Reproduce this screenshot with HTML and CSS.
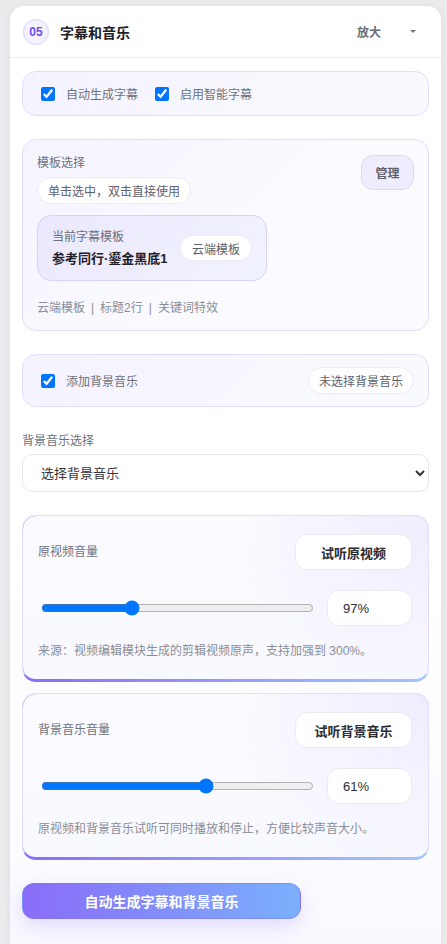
FILE: index.html
```html
<!DOCTYPE html>
<html lang="zh-CN">
<head>
<meta charset="utf-8">
<title>字幕和音乐</title>
<link rel="stylesheet" href="styles.css">
</head>
<body>
<div class="panel">
  <div class="panel-head">
    <span class="badge">05</span>
    <span class="title">字幕和音乐</span>
    <span class="zoom">放大</span>
    <span class="caret"></span>
  </div>
  <div class="panel-body">
    <div class="card card-checks">
      <label class="check"><input type="checkbox" checked><span>自动生成字幕</span></label>
      <label class="check"><input type="checkbox" checked><span>启用智能字幕</span></label>
    </div>

    <div class="card card-template">
      <div class="tpl-top">
        <div class="tpl-left">
          <div class="label">模板选择</div>
          <span class="pill">单击选中，双击直接使用</span>
        </div>
        <button class="btn-manage">管理</button>
      </div>
      <div class="tpl-current">
        <div class="tpl-info">
          <div class="tpl-sub">当前字幕模板</div>
          <div class="tpl-name">参考同行·鎏金黑底1</div>
        </div>
        <span class="pill pill-sm">云端模板</span>
      </div>
      <div class="tpl-meta">云端模板&ensp;|&ensp;标题2行&ensp;|&ensp;关键词特效</div>
    </div>

    <div class="card card-bgm">
      <label class="check"><input type="checkbox" checked><span>添加背景音乐</span></label>
      <span class="pill">未选择背景音乐</span>
    </div>

    <div class="field">
      <div class="field-label">背景音乐选择</div>
      <select class="select">
        <option>选择背景音乐</option>
      </select>
    </div>

    <div class="vol-group">
      <div class="card card-vol">
        <div class="vol-top">
          <span class="label">原视频音量</span>
          <button class="btn-listen">试听原视频</button>
        </div>
        <div class="vol-row">
          <input class="range" type="range" min="0" max="300" value="97">
          <input class="num" type="text" value="97%">
        </div>
        <div class="note">来源：视频编辑模块生成的剪辑视频原声，支持加强到 300%。</div>
      </div>

      <div class="card card-vol">
        <div class="vol-top">
          <span class="label">背景音乐音量</span>
          <button class="btn-listen">试听背景音乐</button>
        </div>
        <div class="vol-row">
          <input class="range" type="range" min="0" max="100" value="61">
          <input class="num" type="text" value="61%">
        </div>
        <div class="note">原视频和背景音乐试听可同时播放和停止，方便比较声音大小。</div>
      </div>
    </div>

    <button class="btn-primary">自动生成字幕和背景音乐</button>
  </div>
</div>
</body>
</html>
```
FILE: styles.css
```css
* { box-sizing: border-box; }
html, body {
  margin: 0;
  padding: 0;
  background: #ebebee;
  font-family: "Liberation Sans", "Noto Sans CJK SC", sans-serif;
  color: #222;
}
body { height: 944px; overflow: hidden; }

.panel {
  margin: 6px 6px 0 10px;
  min-height: 938px;
  background: linear-gradient(180deg, #ffffff 0%, #ffffff 60%, #faf9ff 100%);
  border-radius: 14px 14px 0 0;
  box-shadow: 0 0 8px rgba(40, 40, 70, 0.06);
}

.panel-head {
  height: 52px;
  display: flex;
  align-items: center;
  padding: 0 12px 0 13px;
  border-bottom: 1px solid #ececf0;
}
.badge {
  width: 26px;
  height: 26px;
  border-radius: 50%;
  border: 1px solid #d8d0fb;
  background: #f5f2ff;
  color: #6b4ff2;
  font-size: 12px;
  font-weight: 700;
  display: flex;
  align-items: center;
  justify-content: center;
}
.title {
  margin-left: 11px;
  font-size: 14px;
  font-weight: 700;
  color: #1f2127;
  flex: 1;
}
.zoom {
  font-size: 12px;
  font-weight: 700;
  color: #6b6e76;
}
.caret {
  margin-left: 29px;
  margin-right: 13px;
  width: 0;
  height: 0;
  border-left: 3px solid transparent;
  border-right: 3px solid transparent;
  border-top: 3px solid #777;
}

.panel-body {
  padding: 13px 12px 24px 12px;
  display: flex;
  flex-direction: column;
}

.card {
  border: 1px solid #e3ddfb;
  border-radius: 14px;
  background: linear-gradient(135deg, #f4f2fe 0%, #f8f8ff 60%, #f9faff 100%);
}

.check {
  display: flex;
  align-items: center;
  font-size: 12px;
  color: #6e717b;
}
.check input {
  width: 14px;
  height: 14px;
  margin: 0 11px 0 0;
  accent-color: #0075ff;
}

.card-checks {
  height: 45px;
  display: flex;
  align-items: center;
  padding: 0 18px;
  gap: 17px;
}

.card-template {
  margin-top: 23px;
  padding: 14px 14px 16px 14px;
  height: 192px;
  background: linear-gradient(135deg, #f6f4ff 0%, #fafaff 55%, #fbfbff 100%);
}
.tpl-top {
  display: flex;
  justify-content: space-between;
  align-items: flex-start;
}
.tpl-left {
  display: flex;
  flex-direction: column;
  align-items: flex-start;
}
.label {
  font-size: 12px;
  color: #6e717b;
  line-height: 18px;
}
.tpl-left .pill { margin-top: 5px; }
.pill {
  display: inline-flex;
  align-items: center;
  height: 27px;
  padding: 0 10px;
  border-radius: 14px;
  background: #ffffff;
  border: 1px solid #eceaf3;
  font-size: 12px;
  color: #5e616b;
  white-space: nowrap;
}
.pill-sm { height: 26px; padding: 0 11px; }
.btn-manage {
  width: 53px;
  height: 35px;
  margin-top: 1px;
  border-radius: 12px;
  border: 1px solid #ddd6fb;
  background: #efedfd;
  font-family: inherit;
  font-size: 12px;
  font-weight: 700;
  color: #5d5f68;
}
.tpl-current {
  margin-top: 11px;
  width: 230px;
  height: 66px;
  border-radius: 14px;
  border: 1px solid #d8d0fa;
  background: linear-gradient(135deg, #ebe8fd 0%, #f1f2fe 100%);
  display: flex;
  align-items: center;
  justify-content: space-between;
  padding: 0 14px 0 14px;
}
.tpl-sub {
  font-size: 12px;
  color: #6e717b;
  line-height: 18px;
}
.tpl-name {
  margin-top: 4px;
  font-size: 13px;
  font-weight: 700;
  color: #1f2127;
  line-height: 18px;
}
.tpl-meta {
  margin-top: 18px;
  font-size: 12px;
  color: #8a8d96;
  line-height: 18px;
}

.card-bgm {
  margin-top: 23px;
  height: 53px;
  display: flex;
  align-items: center;
  justify-content: space-between;
  padding: 0 14px 0 18px;
}

.field { margin-top: 25px; }
.field-label {
  font-size: 12px;
  color: #6e717b;
  line-height: 18px;
}
.select {
  margin-top: 4px;
  width: 100%;
  height: 38px;
  border: 1px solid #e6e6ee;
  border-radius: 10px;
  background: #ffffff;
  padding: 0 4px 0 14px;
  font-family: inherit;
  font-size: 13px;
  color: #33353b;
}

.vol-group {
  margin-top: 23px;
  display: flex;
  flex-direction: column;
  gap: 11px;
}
.card-vol {
  height: 167px;
  padding: 18px 16px 0 15px;
  border: 1px solid #e3ddfb;
  border-bottom: 3px solid transparent;
  background:
    radial-gradient(circle at 100% 0%, #efecfe 0%, rgba(247,247,255,0) 45%) padding-box,
    linear-gradient(180deg, #fbfbff 0%, #f8f9ff 100%) padding-box,
    linear-gradient(90deg, #8b6cf7 0%, #a4c6fd 100%) border-box;
}
.vol-top {
  display: flex;
  justify-content: space-between;
  align-items: center;
}
.btn-listen {
  width: 117px;
  height: 36px;
  border-radius: 12px;
  border: 1px solid #ebeaf2;
  background: #ffffff;
  font-family: inherit;
  font-size: 13px;
  font-weight: 700;
  color: #2a2c32;
}
.vol-row {
  margin-top: 20px;
  display: flex;
  align-items: center;
  gap: 13px;
}
.range {
  flex: 1;
  min-width: 0;
  margin: 0 0 0 3px;
  accent-color: #0075ff;
}
.num {
  width: 85px;
  height: 36px;
  border-radius: 12px;
  border: 1px solid #ebeaf2;
  background: #ffffff;
  padding: 0 15px;
  font-family: inherit;
  font-size: 13px;
  color: #2a2c32;
}
.note {
  margin-top: 16px;
  font-size: 12px;
  color: #8a8d96;
  line-height: 18px;
  white-space: nowrap;
}

.btn-primary {
  margin-top: 23px;
  width: 279px;
  height: 36px;
  border: 1px solid rgba(130, 120, 240, 0.5);
  border-radius: 12px;
  background: linear-gradient(90deg, #8a6cf8 0%, #7ab0fc 100%);
  color: #ffffff;
  font-family: inherit;
  font-size: 14px;
  font-weight: 700;
  box-shadow: 0 8px 18px rgba(140, 120, 240, 0.22);
}
```
